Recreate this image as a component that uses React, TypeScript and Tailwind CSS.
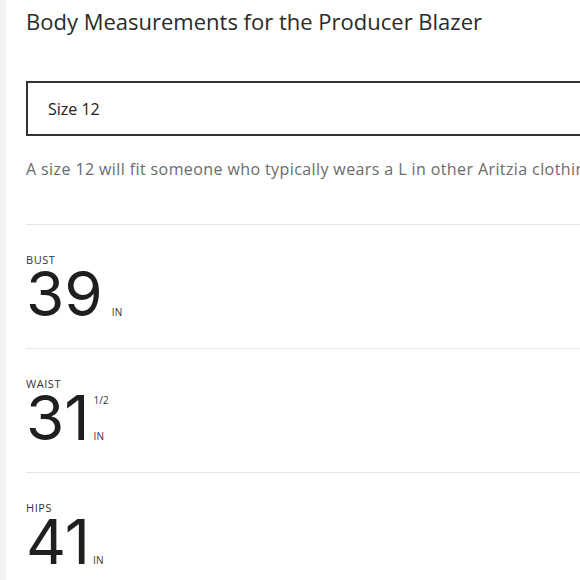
import React from "react";

const rows = [
  { label: "Bust", value: "39", frac: "", gap: "ml-[9px]" },
  { label: "Waist", value: "31", frac: "1/2", gap: "ml-[4px]" },
  { label: "Hips", value: "41", frac: "", gap: "ml-[3px]" },
];

export default function App() {
  return (
    <div className="flex min-h-screen w-[580px] overflow-hidden bg-white">
      <div className="w-[6px] shrink-0 bg-[#f2f2f2]" />
      <div className="w-[700px] shrink-0 pl-5 font-['Open_Sans',sans-serif] text-[#222]">
        <h1 className="pt-[5px] text-[22px] leading-8 font-normal whitespace-nowrap text-[#2a2a2a]">
          Body Measurements for the Producer Blazer
        </h1>

        <div className="mt-[44px] flex h-[55px] items-center border-2 border-[#333] pl-5 text-[16px] text-[#222]">
          Size 12
        </div>

        <p className="mt-[21px] text-[16px] leading-6 tracking-[0.4px] whitespace-nowrap text-[#6b6b6b]">
          A size 12 will fit someone who typically wears a L in other Aritzia clothing
        </p>

        <div className="mt-[43px]">
          {rows.map((r) => (
            <div key={r.label} className="border-t border-[#e6e6e6] pt-[29px] pb-[26px]">
              <div className="text-[11px] leading-3 tracking-wider uppercase text-[#333]">
                {r.label}
              </div>
              <div className="flex items-stretch font-['Inter',sans-serif]">
                <span className="text-[62px] leading-[56px] text-[#1f1f1f]">
                  {r.value}
                </span>
                <div
                  className={`${r.gap} flex flex-col justify-between pt-[5px] pb-[5px] font-['Open_Sans',sans-serif] text-[10px] leading-[10px] text-[#333]`}
                >
                  <span>{r.frac}</span>
                  <span className="tracking-wide">IN</span>
                </div>
              </div>
            </div>
          ))}
        </div>
      </div>
    </div>
  );
}
